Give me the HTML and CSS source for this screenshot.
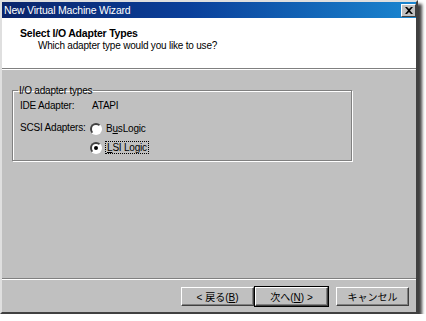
FILE: index.html
```html
<!DOCTYPE html>
<html lang="ja">
<head>
    <meta charset="UTF-8">
    <title>New Virtual Machine Wizard</title>
    <link rel="stylesheet" href="styles.css">
</head>
<body>
    <div class="window">
        <div class="titlebar">
            <span class="title">New Virtual Machine Wizard</span>
            <span class="close">
                <svg width="8" height="7" viewBox="0 0 8 7"><path d="M0 0h2l2 2 2-2h2L5 3.5 8 7H6L4 5 2 7H0l3-3.5z" fill="#000"/></svg>
            </span>
        </div>
        <div class="header">
            <div class="heading">Select I/O Adapter Types</div>
            <div class="subheading">Which adapter type would you like to use?</div>
        </div>
        <div class="body">
            <fieldset class="group">
                <legend>I/O adapter types</legend>
                <div class="row">
                    <span class="label">IDE Adapter:</span>
                    <span class="value">ATAPI</span>
                </div>
                <div class="row scsi">
                    <span class="label">SCSI Adapters:</span>
                    <div class="radios">
                        <div class="radio"><span class="dot"></span><span>B<u>u</u>sLogic</span></div>
                        <div class="radio"><span class="dot on"></span><span class="focus"><u>L</u>SI Logic</span></div>
                    </div>
                </div>
            </fieldset>
        </div>
        <div class="footer">
            <button class="btn">&lt; 戻る(<u>B</u>)</button>
            <button class="btn default">次へ(<u>N</u>) &gt;</button>
            <button class="btn cancel">キャンセル</button>
        </div>
    </div>
</body>
</html>
```

FILE: styles.css
```css
body{
    margin:0;
    background:#fff;
    font-family: "Liberation Sans", "Noto Sans CJK JP", sans-serif;
    font-size:10px;
    letter-spacing:-0.2px;
    color:#000;
}
.window{
    width:414px;
    height:310px;
    background:#c0c0c0;
    border:2px solid;
    border-color:#dfdfdf #404040 #404040 #dfdfdf;
    box-shadow: 4px 4px 3px rgba(0,0,0,0.75);
    display:flex;
    flex-direction:column;
}
.titlebar{
    height:16px;
    background: linear-gradient(to right, #0a246a, #0a3f9a 45%, #1a86d0);
    display:flex;
    align-items:center;
    justify-content:space-between;
    padding:0 0 0 2px;
}
.title{
    color:#fff;
    font-size:10.5px;
}
.close{
    width:13px;
    height:11px;
    background:#c0c0c0;
    border:1px solid;
    border-color:#fff #404040 #404040 #fff;
    display:flex;
    align-items:center;
    justify-content:center;
}
.header{
    background:#fff;
    height:51px;
    padding:9px 0 0 18px;
    box-sizing:border-box;
    border-bottom:1px solid #808080;
    box-shadow: 0 1px 0 #fff;
}
.heading{
    font-weight:bold;
    font-size:10.5px;
}
.subheading{
    padding-left:18px;
    margin-top:1px;
}
.body{
    flex:1;
    padding:16px 0 0 10px;
    border-bottom:1px solid #808080;
    box-shadow: 0 1px 0 #fff;
}
.group{
    width:340px;
    height:76px;
    margin:0;
    padding:0 0 0 7px;
    border:1px solid #808080;
    box-shadow: inset 1px 1px 0 #fff, 1px 1px 0 #fff;
    box-sizing:border-box;
}
.group legend{
    padding:0 1px;
    margin-left:-2px;
}
.row{
    display:flex;
    height:13px;
    align-items:center;
    margin-top:3px;
}
.label{
    width:70px;
    white-space:nowrap;
}
.value{
    padding-left:2px;
}
.scsi{
    align-items:flex-start;
    margin-top:10px;
}
.radios{
    display:flex;
    flex-direction:column;
    gap:6px;
}
.radio{
    display:flex;
    align-items:center;
    height:13px;
}
.dot{
    width:8px;
    height:8px;
    border-radius:50%;
    background:#fff;
    border:2px solid;
    border-color:#404040 #fff #fff #404040;
    margin-right:4px;
    display:flex;
    align-items:center;
    justify-content:center;
}
.dot.on::after{
    content:"";
    width:4px;
    height:4px;
    border-radius:50%;
    background:#000;
}
.focus{
    outline:1px dotted #000;
    padding:0 1px;
}
.footer{
    height:33px;
    display:flex;
    align-items:flex-start;
    padding:8px 0 0 179px;
    box-sizing:border-box;
}
.btn{
    width:73px;
    height:19px;
    font-family: "Liberation Sans", "Noto Sans CJK JP", sans-serif;
    font-size:10px;
    background:#c0c0c0;
    border:1px solid;
    border-color:#fff #404040 #404040 #fff;
    box-shadow: inset -1px -1px 0 #808080;
    padding:0;
    color:#000;
}
.default{
    outline:1px solid #000;
    margin-left:1px;
}
.cancel{
    margin-left:8px;
}
```
